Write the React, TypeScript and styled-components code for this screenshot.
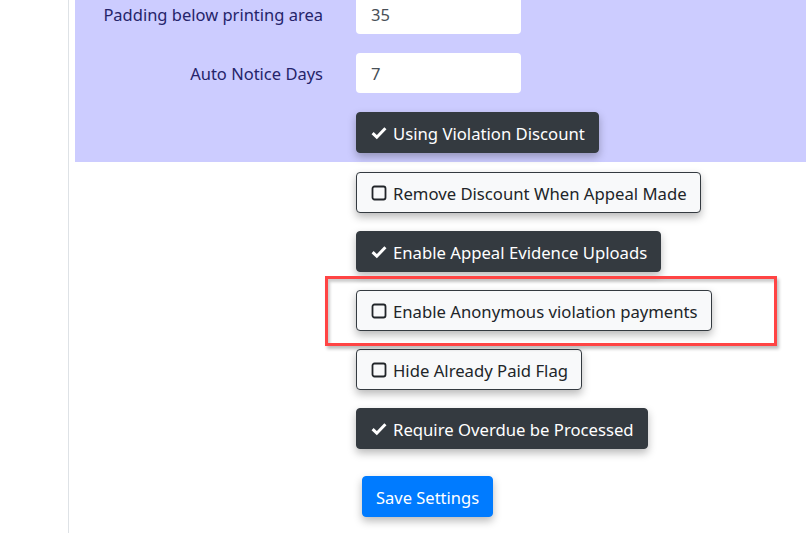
import styled, { createGlobalStyle } from "styled-components";

const Global = createGlobalStyle`
  html, body { margin: 0; padding: 0; background: #fff; }
  body {
    font-family: "Noto Sans", "Open Sans", sans-serif;
    color: #212529;
    overflow: hidden;
  }
`;

const Page = styled.div`
  display: flex;
  height: 533px;
`;

const Gutter = styled.div`
  width: 68px;
  border-right: 1px solid #dee2e6;
  flex-shrink: 0;
`;

const Main = styled.div`
  flex: 1;
  display: flex;
  flex-direction: column;
  margin-left: 6px;
  margin-top: -6px;
`;

const Panel = styled.div`
  background: #ccccff;
  padding: 0 0 9px;
  display: flex;
  flex-direction: column;
  gap: 19px;
`;

const Row = styled.div`
  display: grid;
  grid-template-columns: 281px 1fr;
  align-items: center;
`;

const Label = styled.label`
  text-align: right;
  padding-right: 33px;
  padding-top: 1px;
  font-size: 16.5px;
  color: #25246a;
`;

const Input = styled.input`
  width: 165px;
  height: 40px;
  box-sizing: border-box;
  border: none;
  border-radius: 4px;
  padding: 1px 15px 0;
  font: inherit;
  font-size: 16.5px;
  color: #495057;
  background: #fff;
`;

const Options = styled.div`
  display: flex;
  flex-direction: column;
  align-items: flex-start;
  gap: 18px;
  padding: 10px 0 0 281px;
`;

const Toggle = styled.button<{ $on: boolean }>`
  display: inline-flex;
  align-items: center;
  gap: 6px;
  height: 41px;
  box-sizing: border-box;
  padding: 1px 13px 0 14px;
  font-family: inherit;
  font-size: 16.7px;
  border-radius: 4px;
  border: 1px solid #343a40;
  background: ${(p) => (p.$on ? "#343a40" : "#f8f9fa")};
  color: ${(p) => (p.$on ? "#fff" : "#212529")};
  box-shadow: 0 4px 8px rgba(0, 0, 0, 0.28);
  cursor: pointer;
  white-space: nowrap;
`;

const Highlight = styled.div`
  position: relative;
  &::after {
    content: "";
    position: absolute;
    left: -31px;
    top: -14px;
    width: 452px;
    height: 70px;
    box-sizing: border-box;
    border: 3px solid #f44;
    box-shadow: 2px 3px 3px rgba(0, 0, 0, 0.25), inset 2px 3px 3px rgba(0, 0, 0, 0.2);
    pointer-events: none;
  }
`;

const SaveButton = styled.button`
  margin: 9px 0 0 6px;
  height: 41px;
  padding: 1px 13px 0;
  font-family: inherit;
  font-size: 16.5px;
  color: #fff;
  background: #007bff;
  border: 1px solid #007bff;
  border-radius: 4px;
  box-shadow: 0 4px 8px rgba(0, 0, 0, 0.28);
  cursor: pointer;
`;

function CheckIcon() {
  return (
    <svg width="16" height="14" viewBox="0 0 16 14">
      <path d="M1.6 7.2 L5.8 11.2 L14.4 2.2" fill="none" stroke="currentColor" strokeWidth="3" strokeLinejoin="miter" />
    </svg>
  );
}

function BoxIcon() {
  return (
    <svg width="16" height="16" viewBox="0 0 16 16">
      <rect x="1.5" y="1.5" width="13" height="13" rx="2" fill="none" stroke="currentColor" strokeWidth="1.8" />
    </svg>
  );
}

function Option({ on, label }: { on: boolean; label: string }) {
  return (
    <Toggle $on={on}>
      {on ? <CheckIcon /> : <BoxIcon />}
      {label}
    </Toggle>
  );
}

export default function App() {
  const options = [
    { label: "Remove Discount When Appeal Made", on: false },
    { label: "Enable Appeal Evidence Uploads", on: true },
    { label: "Enable Anonymous violation payments", on: false, marked: true },
    { label: "Hide Already Paid Flag", on: false },
    { label: "Require Overdue be Processed", on: true },
  ];

  return (
    <>
      <Global />
      <Page>
        <Gutter />
        <Main>
          <Panel>
            <Row>
              <Label>Padding below printing area</Label>
              <Input defaultValue="35" />
            </Row>
            <Row>
              <Label>Auto Notice Days</Label>
              <Input defaultValue="7" />
            </Row>
            <Row>
              <span />
              <div>
                <Option on label="Using Violation Discount" />
              </div>
            </Row>
          </Panel>
          <Options>
            {options.map((o) =>
              o.marked ? (
                <Highlight key={o.label}>
                  <Option on={o.on} label={o.label} />
                </Highlight>
              ) : (
                <Option key={o.label} on={o.on} label={o.label} />
              )
            )}
            <SaveButton>Save Settings</SaveButton>
          </Options>
        </Main>
      </Page>
    </>
  );
}
